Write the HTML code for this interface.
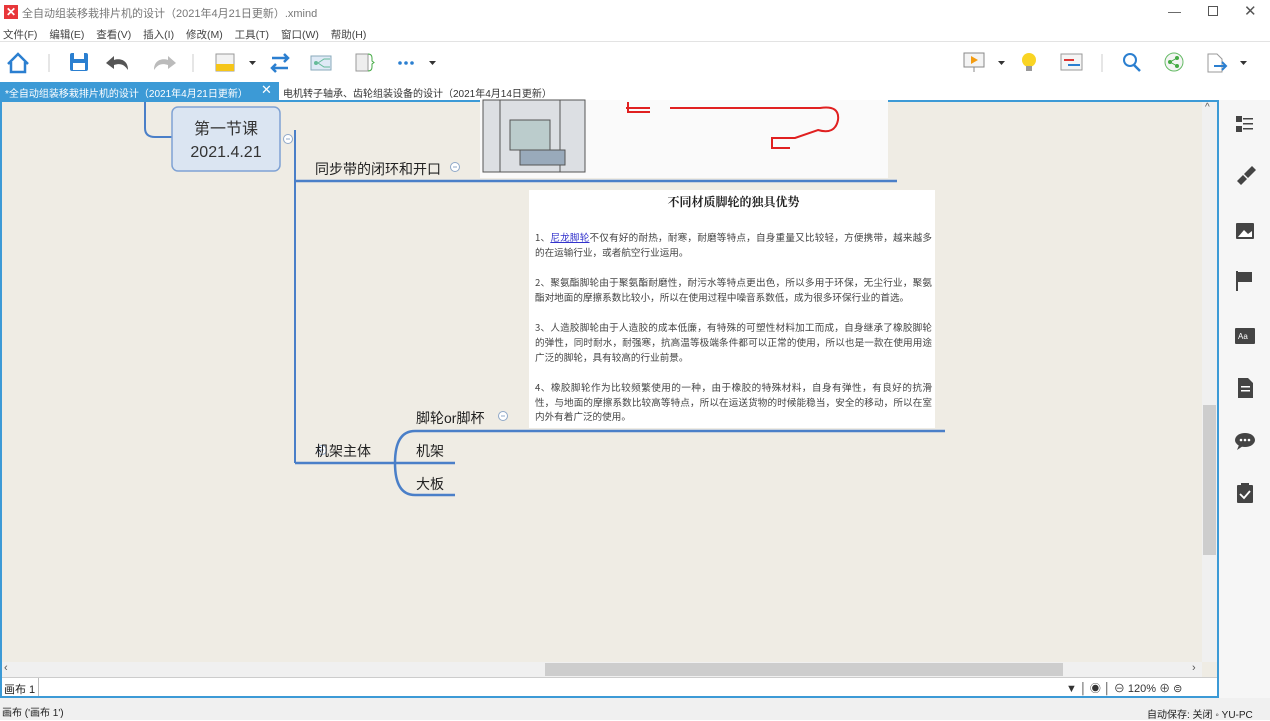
<!DOCTYPE html>
<html><head><meta charset="utf-8"><style>
*{margin:0;padding:0;box-sizing:border-box}
body{width:1270px;height:720px;overflow:hidden;background:#fff;font-family:"Liberation Sans","Noto Sans CJK SC",sans-serif;position:relative}
.a{position:absolute}
.t{font-size:11px;color:#333}
</style></head><body>
<!-- title bar -->
<div class="a" style="left:0;top:0;width:1270px;height:24px;background:#fff"></div>
<div class="a" style="left:4px;top:5px;width:14px;height:14px;background:#e8363a;color:#fff;font-size:12px;line-height:14px;text-align:center;font-weight:bold">✕</div>
<div class="a t" style="left:22px;top:5px;color:#777">全自动组装移栽排片机的设计（2021年4月21日更新）.xmind</div>
<div class="a" style="left:1168px;top:4px;color:#555;font-size:13px">—</div>
<div class="a" style="left:1208px;top:6px;width:10px;height:10px;border:1px solid #555"></div>
<div class="a" style="left:1244px;top:2px;color:#555;font-size:15px">✕</div>
<!-- menu -->
<div class="a t" style="left:3px;top:27px;color:#444;font-size:10.5px;word-spacing:9px">文件(F) 编辑(E) 查看(V) 插入(I) 修改(M) 工具(T) 窗口(W) 帮助(H)</div>
<div class="a" style="left:0;top:41px;width:1270px;height:1px;background:#e3e3e3"></div>
<!-- toolbar -->
<svg class="a" style="left:0;top:44px" width="1270" height="38">
<path d="M8 20 L18 10 L28 20 M11 18 V28 H25 V18" fill="none" stroke="#2b7fd0" stroke-width="2.5"/>
<line x1="49" y1="10" x2="49" y2="28" stroke="#ccc"/>
<rect x="70" y="9" width="18" height="18" rx="2" fill="#2b7fd0"/><rect x="74" y="9" width="10" height="6" fill="#fff"/><rect x="73" y="19" width="12" height="7" fill="#fff"/>
<path d="M128 26 C128 16 120 14 114 16 L114 12 L106 19 L114 25 L114 21 C120 19 124 20 128 26Z" fill="#555"/>
<path d="M154 26 C154 16 162 14 168 16 L168 12 L176 19 L168 25 L168 21 C162 19 158 20 154 26Z" fill="#bbb"/>
<line x1="193" y1="10" x2="193" y2="28" stroke="#ccc"/>
<rect x="216" y="10" width="18" height="17" fill="#f2f2f2" stroke="#999"/><rect x="216" y="20" width="18" height="7" fill="#f5c518"/>
<path d="M249 17 L256 17 L252.5 21Z" fill="#333"/>
<path d="M272 14 H288 M284 10 L288 14 L284 18 M288 24 H272 M276 20 L272 24 L276 28" stroke="#2b7fd0" stroke-width="2.5" fill="none"/>
<rect x="311" y="12" width="20" height="14" fill="#dfeaf6" stroke="#8ab"/><circle cx="316" cy="19" r="2" fill="#6b9"/><path d="M318 19 L324 15 H330 M318 19 L324 23 H330" stroke="#6b9" fill="none"/>
<rect x="356" y="10" width="12" height="17" fill="#eee" stroke="#999"/><path d="M368 10 Q372 10 372 14 V17 L374 18.5 L372 20 V23 Q372 27 368 27" stroke="#4a4" fill="none"/>
<circle cx="400" cy="19" r="1.8" fill="#2b7fd0"/><circle cx="406" cy="19" r="1.8" fill="#2b7fd0"/><circle cx="412" cy="19" r="1.8" fill="#2b7fd0"/>
<path d="M429 17 L436 17 L432.5 21Z" fill="#333"/>
<rect x="964" y="9" width="20" height="14" fill="#f4f4f4" stroke="#888"/><path d="M971 12 L978 16 L971 20Z" fill="#f39c12"/><line x1="974" y1="23" x2="974" y2="28" stroke="#888"/>
<path d="M998 17 L1005 17 L1001.5 21Z" fill="#333"/>
<circle cx="1029" cy="16" r="7" fill="#f9d423"/><rect x="1026" y="22" width="6" height="5" fill="#999"/>
<rect x="1061" y="10" width="21" height="16" fill="#f5f5f5" stroke="#999"/><line x1="1064" y1="16" x2="1074" y2="16" stroke="#d33" stroke-width="2"/><line x1="1068" y1="21" x2="1080" y2="21" stroke="#2b7fd0" stroke-width="2"/>
<line x1="1102" y1="10" x2="1102" y2="28" stroke="#ccc"/>
<circle cx="1130" cy="16" r="6" fill="none" stroke="#2b7fd0" stroke-width="2"/><line x1="1134" y1="21" x2="1140" y2="27" stroke="#2b7fd0" stroke-width="2.5"/>
<circle cx="1174" cy="18" r="9" fill="#f4f4f4" stroke="#6b6"/><circle cx="1170" cy="18" r="2" fill="#4a4"/><circle cx="1177" cy="14" r="2" fill="#4a4"/><circle cx="1177" cy="22" r="2" fill="#4a4"/><path d="M1170 18 L1177 14 M1170 18 L1177 22" stroke="#4a4"/>
<path d="M1208 10 H1217 L1222 15 V28 H1208Z" fill="#fff" stroke="#999"/><path d="M1214 22 H1226 M1222 18 L1226 22 L1222 26" stroke="#2b7fd0" stroke-width="2" fill="none"/>
<path d="M1240 17 L1247 17 L1243.5 21Z" fill="#333"/>
</svg>
<!-- tabs -->
<div class="a" style="left:0;top:82px;width:279px;height:19px;background:#3c9ad6"></div>
<div class="a t" style="left:5px;top:85px;color:#fff;font-size:10px">*全自动组装移栽排片机的设计（2021年4月21日更新）</div>
<div class="a" style="left:261px;top:82px;color:#fff;font-size:13px">✕</div>
<div class="a t" style="left:283px;top:85px;color:#333;font-size:10px">电机转子轴承、齿轮组装设备的设计（2021年4月14日更新）</div>
<!-- editor frame -->
<div class="a" style="left:0;top:100px;width:1219px;height:598px;border:2px solid #3c9ad6;background:#efece4"></div>
<!-- scrollbars -->
<div class="a" style="left:1202px;top:102px;width:15px;height:560px;background:#f0f0f0"></div>
<div class="a" style="left:1203px;top:405px;width:13px;height:150px;background:#cdcdcd"></div>
<div class="a" style="left:1205px;top:102px;font-size:10px;color:#555">^</div>
<div class="a" style="left:2px;top:662px;width:1200px;height:15px;background:#f0f0f0"></div>
<div class="a" style="left:545px;top:663px;width:518px;height:13px;background:#cdcdcd"></div>
<div class="a" style="left:4px;top:662px;font-size:11px;color:#555">‹</div>
<div class="a" style="left:1192px;top:662px;font-size:11px;color:#555">›</div>
<!-- bottom bar -->
<div class="a" style="left:2px;top:677px;width:1215px;height:19px;background:#fff;border-top:1px solid #ccc"></div>
<div class="a" style="left:38px;top:678px;width:1px;height:18px;background:#bbb"></div>
<div class="a t" style="left:4px;top:681px;color:#222">画布 1</div>
<div class="a t" style="left:1066px;top:680px;color:#333">▼ │ ◉ │ ⊖ 120% ⊕ ⊜</div>
<!-- status -->
<div class="a" style="left:0;top:698px;width:1270px;height:22px;background:#f0f0f0"></div>
<div class="a t" style="left:2px;top:704px;color:#222;font-size:10px">画布 ('画布 1')</div>
<div class="a t" style="left:1147px;top:706px;color:#222;font-size:10px">自动保存: 关闭 ◦ YU-PC</div>
<!-- right sidebar -->
<div class="a" style="left:1219px;top:100px;width:51px;height:598px;background:#f6f6f6"></div>
<svg class="a" style="left:1230px;top:110px" width="30" height="400" fill="#444">
<rect x="6" y="6" width="6" height="6"/><rect x="6" y="16" width="6" height="6"/><rect x="13" y="8" width="10" height="1.5"/><rect x="13" y="13" width="10" height="1.5"/><rect x="13" y="18" width="10" height="1.5"/>
<path d="M22 56 L14 64 L18 68 L26 60Z M13 65 L7 71 L11 75 L17 69Z"/>
<rect x="6" y="113" width="18" height="16" rx="1"/><path d="M8 127 L14 120 L18 124 L22 121 V127Z" fill="#fff"/>
<rect x="6" y="161" width="2" height="20"/><rect x="8" y="162" width="14" height="10"/>
<rect x="5" y="218" width="20" height="16" rx="1"/><text x="8" y="229" font-size="8" fill="#fff" font-family="Liberation Sans">Aa</text>
<path d="M8 268 H18 L23 273 V288 H8Z"/><rect x="11" y="276" width="9" height="1.5" fill="#fff"/><rect x="11" y="280" width="9" height="1.5" fill="#fff"/>
<ellipse cx="15" cy="330" rx="10" ry="7"/><path d="M9 335 L7 340 L13 336Z"/><circle cx="11" cy="330" r="1.3" fill="#fff"/><circle cx="15" cy="330" r="1.3" fill="#fff"/><circle cx="19" cy="330" r="1.3" fill="#fff"/>
<rect x="7" y="375" width="16" height="18" rx="1"/><rect x="11" y="373" width="8" height="4"/><path d="M10 384 L14 388 L20 381" stroke="#fff" stroke-width="1.8" fill="none"/>
</svg>
<!-- mind map -->
<svg class="a" style="left:0;top:0" width="1200" height="660">
<path d="M145 102 V128 Q145 137 155 137 H172" stroke="#4a7fc8" stroke-width="2" fill="none"/>
<path d="M295 130 V463" stroke="#4a7fc8" stroke-width="2"/>
<path d="M295 181 H897" stroke="#4a7fc8" stroke-width="2.5"/>
<path d="M295 463 H395" stroke="#4a7fc8" stroke-width="2.5"/>
<path d="M395 463 Q395 431 415 431 H945" stroke="#4a7fc8" stroke-width="2.5" fill="none"/>
<path d="M395 463 H455" stroke="#4a7fc8" stroke-width="2.5"/>
<path d="M395 463 Q395 495 415 495 H455" stroke="#4a7fc8" stroke-width="2.5" fill="none"/>
<rect x="172" y="107" width="108" height="64" rx="6" fill="#dbe5f2" stroke="#7fa2d4" stroke-width="1.5"/>
<g fill="#fff" stroke="#8fa8c8"><circle cx="288" cy="139" r="4.5"/><circle cx="455" cy="167" r="4.5"/><circle cx="503" cy="416" r="4.5"/><circle cx="322" cy="450" r="4.5"/></g>
<g stroke="#8fa8c8"><line x1="286" y1="139" x2="290" y2="139"/><line x1="453" y1="167" x2="457" y2="167"/><line x1="501" y1="416" x2="505" y2="416"/><line x1="320" y1="450" x2="324" y2="450"/></g>
<!-- image 1 -->
<rect x="480" y="100" width="408" height="78" fill="#fafafa"/>
<g stroke="#555" fill="none"><rect x="483" y="100" width="102" height="72" fill="#dcdfe3"/><line x1="500" y1="100" x2="500" y2="172"/><line x1="560" y1="100" x2="560" y2="172"/><rect x="510" y="120" width="40" height="30" fill="#bcc"/><rect x="520" y="150" width="45" height="15" fill="#9ab"/></g>
<path d="M626 108 H650 M628 102 V112 H650 M670 108 H820 Q840 105 838 120 Q835 135 818 130 L795 138 H772 V148 H790" stroke="#e02020" stroke-width="2" fill="none"/>
<!-- image 2 -->
<rect x="529" y="190" width="406" height="238" fill="#fff"/>
</svg>
<div class="a" style="left:186px;top:118px;font-size:16px;color:#333;line-height:23px;text-align:center;width:80px">第一节课<br>2021.4.21</div>
<div class="a" style="left:315px;top:159px;font-size:14px;color:#222">同步带的闭环和开口</div>
<div class="a" style="left:315px;top:441px;font-size:14px;color:#222">机架主体</div>
<div class="a" style="left:416px;top:408px;font-size:14px;color:#222">脚轮or脚杯</div>
<div class="a" style="left:416px;top:441px;font-size:14px;color:#222">机架</div>
<div class="a" style="left:416px;top:474px;font-size:14px;color:#222">大板</div>
<div class="a" style="left:535px;top:194px;width:397px;font-family:'Noto Sans CJK SC',sans-serif;font-size:9.6px;color:#444;line-height:14.6px;text-align:justify">
<div style="text-align:center;font-family:'Noto Serif CJK SC',serif;font-size:12px;font-weight:bold;color:#222;margin-bottom:20px;line-height:16px">不同材质脚轮的独具优势</div>
<p style="margin-bottom:16px">1、<span style="color:#33c;text-decoration:underline">尼龙脚轮</span>不仅有好的耐热，耐寒，耐磨等特点，自身重量又比较轻，方便携带，越来越多的在运输行业，或者航空行业运用。</p>
<p style="margin-bottom:16px">2、聚氨酯脚轮由于聚氨酯耐磨性，耐污水等特点更出色，所以多用于环保，无尘行业，聚氨酯对地面的摩擦系数比较小，所以在使用过程中噪音系数低，成为很多环保行业的首选。</p>
<p style="margin-bottom:16px">3、人造胶脚轮由于人造胶的成本低廉，有特殊的可塑性材料加工而成，自身继承了橡胶脚轮的弹性，同时耐水，耐强寒，抗高温等极端条件都可以正常的使用，所以也是一款在使用用途广泛的脚轮，具有较高的行业前景。</p>
<p>4、橡胶脚轮作为比较频繁使用的一种，由于橡胶的特殊材料，自身有弹性，有良好的抗滑性，与地面的摩擦系数比较高等特点，所以在运送货物的时候能稳当，安全的移动，所以在室内外有着广泛的使用。</p>
</div>
</body></html>
